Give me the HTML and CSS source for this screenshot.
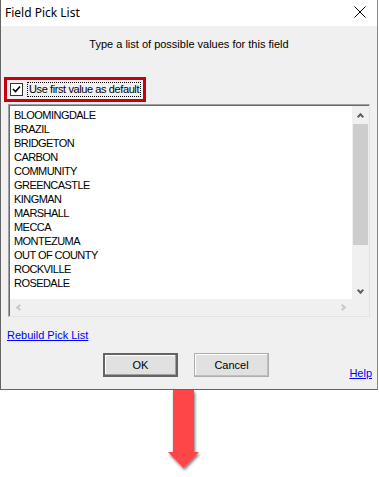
FILE: index.html
```html
<!DOCTYPE html>
<html lang="en">
<head>
    <meta charset="UTF-8">
    <meta name="viewport" content="width=device-width, initial-scale=1.0">
    <title>Field Pick List</title>
    <link rel="stylesheet" href="styles.css">
</head>
<body>
    <div class="dialog">
        <div class="titlebar">
            <span class="title">Field Pick List</span>
            <svg class="close" width="12" height="12" viewBox="0 0 12 12">
                <path d="M0.5 0.5 L11.5 11.5 M11.5 0.5 L0.5 11.5" stroke="#000" stroke-width="1" fill="none"/>
            </svg>
        </div>

        <div class="content">
            <p class="intro">Type a list of possible values for this field</p>

            <div class="highlight">
                <label class="check">
                    <span class="box">
                        <svg width="9" height="9" viewBox="0 0 9 9">
                            <path d="M1 4 L3.5 6.5 L8 1.5" stroke="#000" stroke-width="1.6" fill="none"/>
                        </svg>
                    </span>
                    <span class="check-label">Use first value as default</span>
                </label>
            </div>

            <div class="listbox">
                <ul class="items" id="items">
                    <!-- les valeurs sont ajoutées ici -->
                </ul>
                <div class="vscroll">
                    <span class="chev up"></span>
                    <span class="thumb"></span>
                    <span class="chev down"></span>
                </div>
                <div class="hscroll">
                    <span class="hchev left"></span>
                    <span class="hchev right"></span>
                </div>
                <div class="corner"></div>
            </div>

            <a class="link rebuild" href="#">Rebuild Pick List</a>

            <div class="buttons">
                <span></span>
                <div class="button-group">
                    <button class="btn default">OK</button>
                    <button class="btn">Cancel</button>
                </div>
                <a class="link help" href="#">Help</a>
            </div>
        </div>
    </div>

    <svg class="arrow" width="40" height="84" viewBox="0 0 40 84">
        <defs>
            <filter id="shadow" x="-30%" y="-10%" width="160%" height="130%">
                <feDropShadow dx="1" dy="2" stdDeviation="1.5" flood-color="#000" flood-opacity="0.55"/>
            </filter>
        </defs>
        <path d="M9 0 H30 V62 H35 L19.5 78 L4 62 H9 Z" fill="#fe4447" filter="url(#shadow)"/>
    </svg>

    <script>
        const valeurs = [
            "BLOOMINGDALE", "BRAZIL", "BRIDGETON", "CARBON", "COMMUNITY",
            "GREENCASTLE", "KINGMAN", "MARSHALL", "MECCA", "MONTEZUMA",
            "OUT OF COUNTY", "ROCKVILLE", "ROSEDALE"
        ];

        const liste = document.getElementById("items");
        valeurs.forEach(v => {
            const li = document.createElement("li");
            li.textContent = v;
            liste.appendChild(li);
        });
    </script>
</body>
</html>
```

FILE: styles.css
```css
body {
    margin: 0;
    background-color: #fff;
    font-family: "Liberation Sans", Arial, sans-serif;
    font-size: 11px;
    color: #000;
}

.dialog {
    width: 378px;
    box-sizing: border-box;
    border-left: 1px solid #646464;
    border-right: 1px solid #8a8a8a;
    border-bottom: 1px solid #646464;
    background-color: #f0f0f0;
}

.titlebar {
    height: 26px;
    background-color: #fff;
    display: flex;
    align-items: center;
    justify-content: space-between;
    padding: 0 11px 0 4px;
}

.title {
    font-family: "Noto Sans", sans-serif;
    font-size: 12px;
    padding-bottom: 2px;
}

.close {
    margin-top: -2px;
}

.content {
    height: 363px;
    display: flex;
    flex-direction: column;
}

.intro {
    margin: 11px 0 0;
    height: 14px;
    line-height: 14px;
    text-align: center;
}

/* cadre rouge autour de la case */
.highlight {
    width: 142px;
    height: 25px;
    box-sizing: border-box;
    border: 3px solid #c8000a;
    margin: 26px 0 0 3px;
    display: flex;
    align-items: center;
    padding-left: 3px;
    white-space: nowrap;
}

.check {
    display: flex;
    align-items: center;
    gap: 4px;
}

.box {
    width: 13px;
    height: 13px;
    box-sizing: border-box;
    border: 1px solid #333;
    background-color: #fff;
    display: flex;
    align-items: center;
    justify-content: center;
    flex-shrink: 0;
}

.check-label {
    border: 1px dotted #000;
    padding: 0 1px;
    line-height: 13px;
    letter-spacing: -0.4px;
}

.listbox {
    margin: 2px 0 0 7px;
    width: 362px;
    height: 213px;
    box-sizing: border-box;
    border-top: 1px solid #a0a0a0;
    border-left: 1px solid #a0a0a0;
    border-bottom: 1px solid #e3e3e3;
    border-right: 1px solid #e3e3e3;
    box-shadow: inset 1px 1px 0 #696969;
    display: grid;
    grid-template-columns: 1fr 17px;
    grid-template-rows: 1fr 17px;
    padding: 1px 0 0 1px;
}

.items {
    list-style: none;
    margin: 0;
    padding: 2px 0 0 4px;
    background-color: #fff;
    overflow: hidden;
}

.items li {
    height: 14px;
    line-height: 14px;
    letter-spacing: -0.55px;
}

.vscroll {
    background-color: #f0f0f0;
    display: flex;
    flex-direction: column;
    align-items: center;
}

.thumb {
    width: 15px;
    height: 121px;
    background-color: #cdcdcd;
}

.chev {
    width: 5px;
    height: 5px;
    border-left: 2px solid #606060;
    border-top: 2px solid #606060;
    box-sizing: border-box;
}

.chev.up {
    transform: rotate(45deg);
    margin: 8px 0 5px;
}

.chev.down {
    transform: rotate(-135deg);
    margin-top: auto;
    margin-bottom: 6px;
}

.hscroll {
    background-color: #f0f0f0;
    display: flex;
    align-items: center;
    justify-content: space-between;
    padding: 0 7px;
}

.hchev {
    width: 5px;
    height: 5px;
    border-left: 2px solid #c8c8c8;
    border-top: 2px solid #c8c8c8;
    box-sizing: border-box;
}

.hchev.left {
    transform: rotate(-45deg);
}

.hchev.right {
    transform: rotate(135deg);
}

.corner {
    background-color: #f0f0f0;
}

.link {
    color: #0000ff;
    text-decoration: underline;
}

.rebuild {
    margin: 11px 0 0 6px;
    align-self: flex-start;
    line-height: 14px;
}

.buttons {
    margin-top: 11px;
    display: grid;
    grid-template-columns: 1fr auto 1fr;
    align-items: end;
}

.button-group {
    display: flex;
    gap: 16px;
    margin-left: -6px;
}

.btn {
    width: 75px;
    height: 24px;
    font-family: "Liberation Sans", Arial, sans-serif;
    font-size: 11px;
    color: #000;
    background-color: #e1e1e1;
    border: 1px solid #adadad;
    box-shadow: inset -1px -1px 0 #c0c0c0, inset 1px 1px 0 #fff;
    padding: 0;
    cursor: pointer;
}

.btn.default {
    border: 2px solid #646464;
    box-shadow: inset -1px -1px 0 #a0a0a0, inset 1px 1px 0 #fff;
}

.help {
    justify-self: end;
    margin: 0 5px -3px 0;
    line-height: 14px;
}

.arrow {
    display: block;
    margin-left: 164px;
}
```
